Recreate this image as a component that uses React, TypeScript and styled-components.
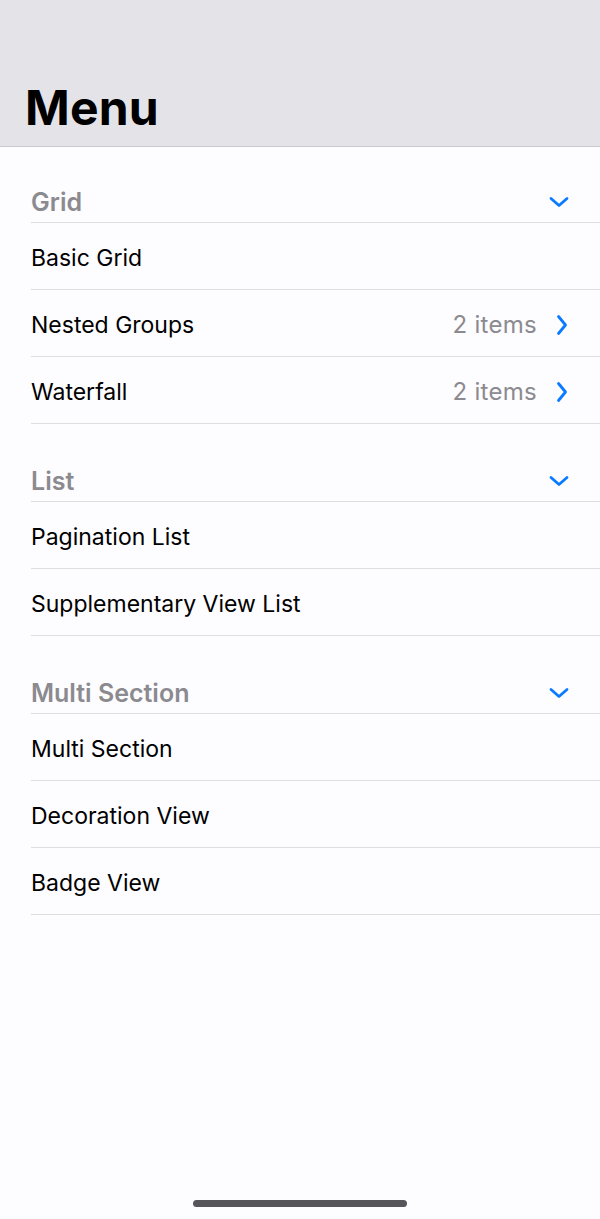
import React from "react";
import styled, { createGlobalStyle } from "styled-components";

const GlobalStyle = createGlobalStyle`
  html, body {
    margin: 0;
    padding: 0;
    background: #fdfcff;
  }
  body {
    font-family: Inter, "Noto Sans", "Liberation Sans", sans-serif;
    -webkit-font-smoothing: antialiased;
  }
`;

const Screen = styled.div`
  position: relative;
  width: 600px;
  height: 1219px;
  background: #fdfcff;
  overflow: hidden;
  display: flex;
  flex-direction: column;
`;

const NavBar = styled.header`
  height: 147px;
  box-sizing: border-box;
  background: #e4e3e8;
  border-bottom: 1px solid #c9c8cd;
  display: flex;
  align-items: flex-end;
  padding: 0 0 14px 25px;
`;

const Title = styled.h1`
  margin: 0;
  font-size: 48px;
  font-weight: 700;
  color: #000;
  letter-spacing: 0.2px;
  line-height: 1;
`;

const List = styled.main`
  display: flex;
  flex-direction: column;
`;

const Section = styled.section`
  padding-top: 34px;
  &:first-child {
    padding-top: 32px;
  }
`;

const Line = styled.div`
  margin-left: 31px;
  border-bottom: 1px solid #dedde2;
  display: flex;
  align-items: center;
  padding-right: 32px;
  box-sizing: content-box;
`;

const HeaderLine = styled(Line)`
  height: 41px;
  padding-top: 2px;
  padding-right: 31px;
`;

const SectionTitle = styled.span`
  flex: 1;
  font-size: 25px;
  font-weight: 600;
  color: #8b8a8f;
`;

const RowLine = styled(Line)`
  height: 63px;
  padding-top: 3px;
`;

const RowLabel = styled.span`
  flex: 1;
  font-size: 23px;
  color: #000;
`;

const Detail = styled.span`
  font-size: 24px;
  letter-spacing: 0.3px;
  color: #8b8a8f;
  margin-right: 19px;
`;

const IconBox = styled.span`
  display: flex;
  align-items: center;
  justify-content: center;
`;

const HomeIndicator = styled.div`
  position: absolute;
  left: 193px;
  bottom: 12px;
  width: 214px;
  height: 7px;
  border-radius: 4px;
  background: #565559;
`;

const ChevronDown = () => (
  <IconBox>
    <svg width="20" height="12" viewBox="0 0 20 12">
      <path
        d="M2 2.5 L10 9.5 L18 2.5"
        fill="none"
        stroke="#0a7bff"
        strokeWidth="2.8"
        strokeLinecap="round"
        strokeLinejoin="round"
      />
    </svg>
  </IconBox>
);

const ChevronRight = () => (
  <IconBox>
    <svg width="12" height="22" viewBox="0 0 12 22">
      <path
        d="M2.5 2.5 L9.5 11 L2.5 19.5"
        fill="none"
        stroke="#0a7bff"
        strokeWidth="2.8"
        strokeLinecap="round"
        strokeLinejoin="round"
      />
    </svg>
  </IconBox>
);

type Item = { label: string; detail?: string };
type Group = { title: string; items: Item[] };

const groups: Group[] = [
  {
    title: "Grid",
    items: [
      { label: "Basic Grid" },
      { label: "Nested Groups", detail: "2 items" },
      { label: "Waterfall", detail: "2 items" },
    ],
  },
  {
    title: "List",
    items: [{ label: "Pagination List" }, { label: "Supplementary View List" }],
  },
  {
    title: "Multi Section",
    items: [
      { label: "Multi Section" },
      { label: "Decoration View" },
      { label: "Badge View" },
    ],
  },
];

export default function App() {
  return (
    <>
      <GlobalStyle />
      <Screen>
        <NavBar>
          <Title>Menu</Title>
        </NavBar>
        <List>
          {groups.map((g) => (
            <Section key={g.title}>
              <HeaderLine>
                <SectionTitle>{g.title}</SectionTitle>
                <ChevronDown />
              </HeaderLine>
              {g.items.map((it) => (
                <RowLine key={it.label}>
                  <RowLabel>{it.label}</RowLabel>
                  {it.detail && (
                    <>
                      <Detail>{it.detail}</Detail>
                      <ChevronRight />
                    </>
                  )}
                </RowLine>
              ))}
            </Section>
          ))}
        </List>
        <HomeIndicator />
      </Screen>
    </>
  );
}
